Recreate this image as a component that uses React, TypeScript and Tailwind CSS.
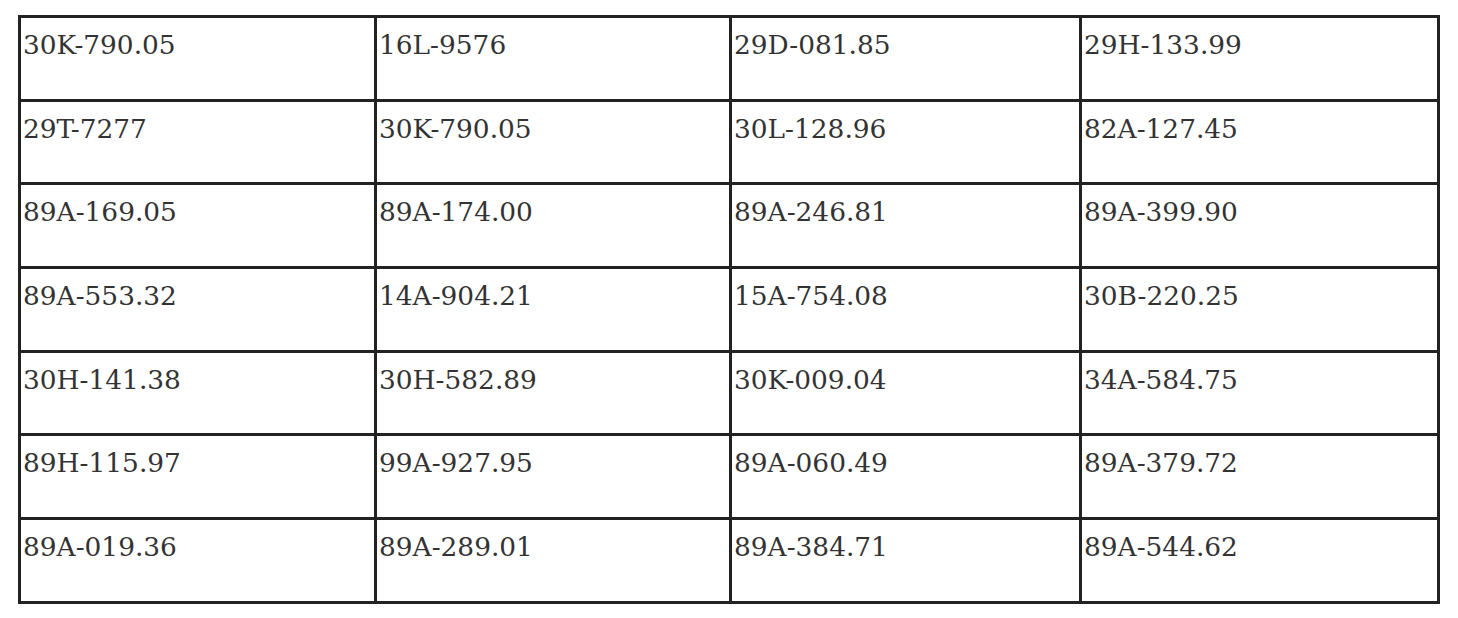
const rows: string[][] = [
  ['30K-790.05', '16L-9576', '29D-081.85', '29H-133.99'],
  ['29T-7277', '30K-790.05', '30L-128.96', '82A-127.45'],
  ['89A-169.05', '89A-174.00', '89A-246.81', '89A-399.90'],
  ['89A-553.32', '14A-904.21', '15A-754.08', '30B-220.25'],
  ['30H-141.38', '30H-582.89', '30K-009.04', '34A-584.75'],
  ['89H-115.97', '99A-927.95', '89A-060.49', '89A-379.72'],
  ['89A-019.36', '89A-289.01', '89A-384.71', '89A-544.62'],
];

export default function App() {
  return (
    <div className="min-h-screen bg-white pl-[18px] pt-[15px]">
      <table
        className="w-[1422px] table-fixed border-collapse border-[3px] border-[#222]"
        style={{ fontFamily: '"DejaVu Serif", serif' }}
      >
        <colgroup>
          <col className="w-[356px]" />
          <col className="w-[355px]" />
          <col className="w-[350px]" />
          <col className="w-[358px]" />
        </colgroup>
        <tbody>
          {rows.map((row, i) => (
            <tr key={i}>
              {row.map((cell, j) => (
                <td
                  key={j}
                  className="h-[83.7px] border-[3px] border-[#222] px-[2px] pt-[11px] align-top text-[26.4px] leading-[32px] text-[#333]"
                >
                  {cell}
                </td>
              ))}
            </tr>
          ))}
        </tbody>
      </table>
    </div>
  );
}
